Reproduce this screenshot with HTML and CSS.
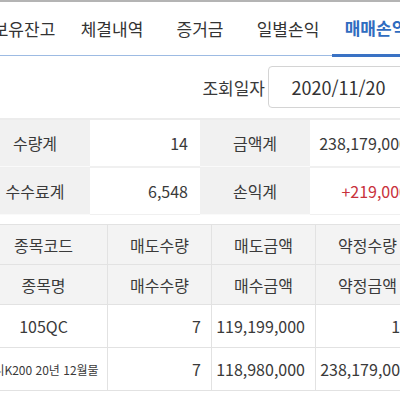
FILE: index.html
```html
<!DOCTYPE html>
<html lang="ko">
<head>
<meta charset="utf-8">
<link rel="stylesheet" href="styles.css">
</head>
<body>
<div class="viewport">
  <div class="page">
    <div class="topline"></div>
    <nav class="tabs">
      <div class="tab">보유잔고</div>
      <div class="tab">체결내역</div>
      <div class="tab">증거금</div>
      <div class="tab">일별손익</div>
      <div class="tab active">매매손익</div>
    </nav>
    <div class="query">
      <span class="query-label">조회일자</span>
      <div class="date-box">2020/11/20</div>
    </div>
    <div class="summary">
      <div class="s-label">수량계</div>
      <div class="s-value">14</div>
      <div class="s-label">금액계</div>
      <div class="s-value">238,179,000</div>
      <div class="s-label">수수료계</div>
      <div class="s-value">6,548</div>
      <div class="s-label">손익계</div>
      <div class="s-value red">+219,000</div>
    </div>
    <div class="list">
      <div class="h">종목코드</div>
      <div class="h">매도수량</div>
      <div class="h">매도금액</div>
      <div class="h">약정수량</div>
      <div class="h">종목명</div>
      <div class="h">매수수량</div>
      <div class="h">매수금액</div>
      <div class="h">약정금액</div>
      <div class="d">105QC</div>
      <div class="d r">7</div>
      <div class="d r">119,199,000</div>
      <div class="d r">14</div>
      <div class="d small">미니K200 20년 12월물</div>
      <div class="d r">7</div>
      <div class="d r">118,980,000</div>
      <div class="d r">238,179,000</div>
    </div>
  </div>
</div>
</body>
</html>
```

FILE: styles.css
```css
html, body {
  margin: 0;
  padding: 0;
  background: #ffffff;
}
body {
  font-family: "Noto Sans CJK KR", "Noto Sans", sans-serif;
  color: #3a3a3a;
}
.viewport {
  width: 400px;
  height: 400px;
  overflow: hidden;
}
.page {
  width: 440px;
  margin-left: -20px;
}
.topline {
  height: 2px;
  background: #b4b4b4;
}
.tabs {
  display: flex;
  height: 53px;
  border-bottom: 1px solid #9dbbe3;
}
.tab {
  width: 88px;
  flex: none;
  display: flex;
  align-items: center;
  justify-content: center;
  font-size: 17px;
  color: #333333;
  box-sizing: border-box;
  padding-bottom: 1px;
}
.tab.active {
  color: #2f6cc0;
  font-weight: 700;
  border-bottom: 3px solid #3a72c4;
  margin-bottom: -2px;
}
.query {
  display: flex;
  justify-content: flex-end;
  align-items: center;
  gap: 3px;
  padding: 10px 11px 9px 0;
}
.query-label {
  font-size: 17px;
  color: #3a3a3a;
}
.date-box {
  width: 141px;
  height: 42px;
  box-sizing: border-box;
  border: 1px solid #d4d4d4;
  border-radius: 4px;
  display: flex;
  align-items: center;
  justify-content: center;
  font-size: 18px;
  color: #333333;
}
.summary {
  display: grid;
  grid-template-columns: 110px 110px 110px 110px;
  grid-auto-rows: 47px;
  border-top: 2px solid #ececec;
  margin-top: 1px;
  row-gap: 1px;
  background: #f0f0f0;
}
.s-label {
  background: #f1f1f1;
  display: flex;
  align-items: center;
  justify-content: center;
  font-size: 16px;
  color: #3a3a3a;
  border-bottom: 1px solid #fafafa;
}
.s-value {
  background: #ffffff;
  display: flex;
  align-items: center;
  justify-content: flex-end;
  padding-right: 12px;
  font-size: 16px;
  color: #3a3a3a;
  border-bottom: 1px solid #f0f0f0;
}
.s-value.red {
  color: #c8313b;
}
.list {
  margin-top: 9px;
  display: grid;
  grid-template-columns: 128px 104px 104px 104px;
  border-top: 1px solid #e2e2e2;
}
.h, .d {
  display: flex;
  align-items: center;
  justify-content: center;
  font-size: 16px;
  color: #3a3a3a;
  border-bottom: 1px solid #e2e2e2;
  border-right: 1px solid #e2e2e2;
  box-sizing: border-box;
  white-space: nowrap;
}
.h {
  height: 40px;
  background: #f3f3f3;
}
.d {
  height: 43px;
  background: #ffffff;
}
.d.r {
  justify-content: flex-end;
  padding-right: 10px;
}
.d.small {
  font-size: 12px;
  padding-right: 6px;
}
```
